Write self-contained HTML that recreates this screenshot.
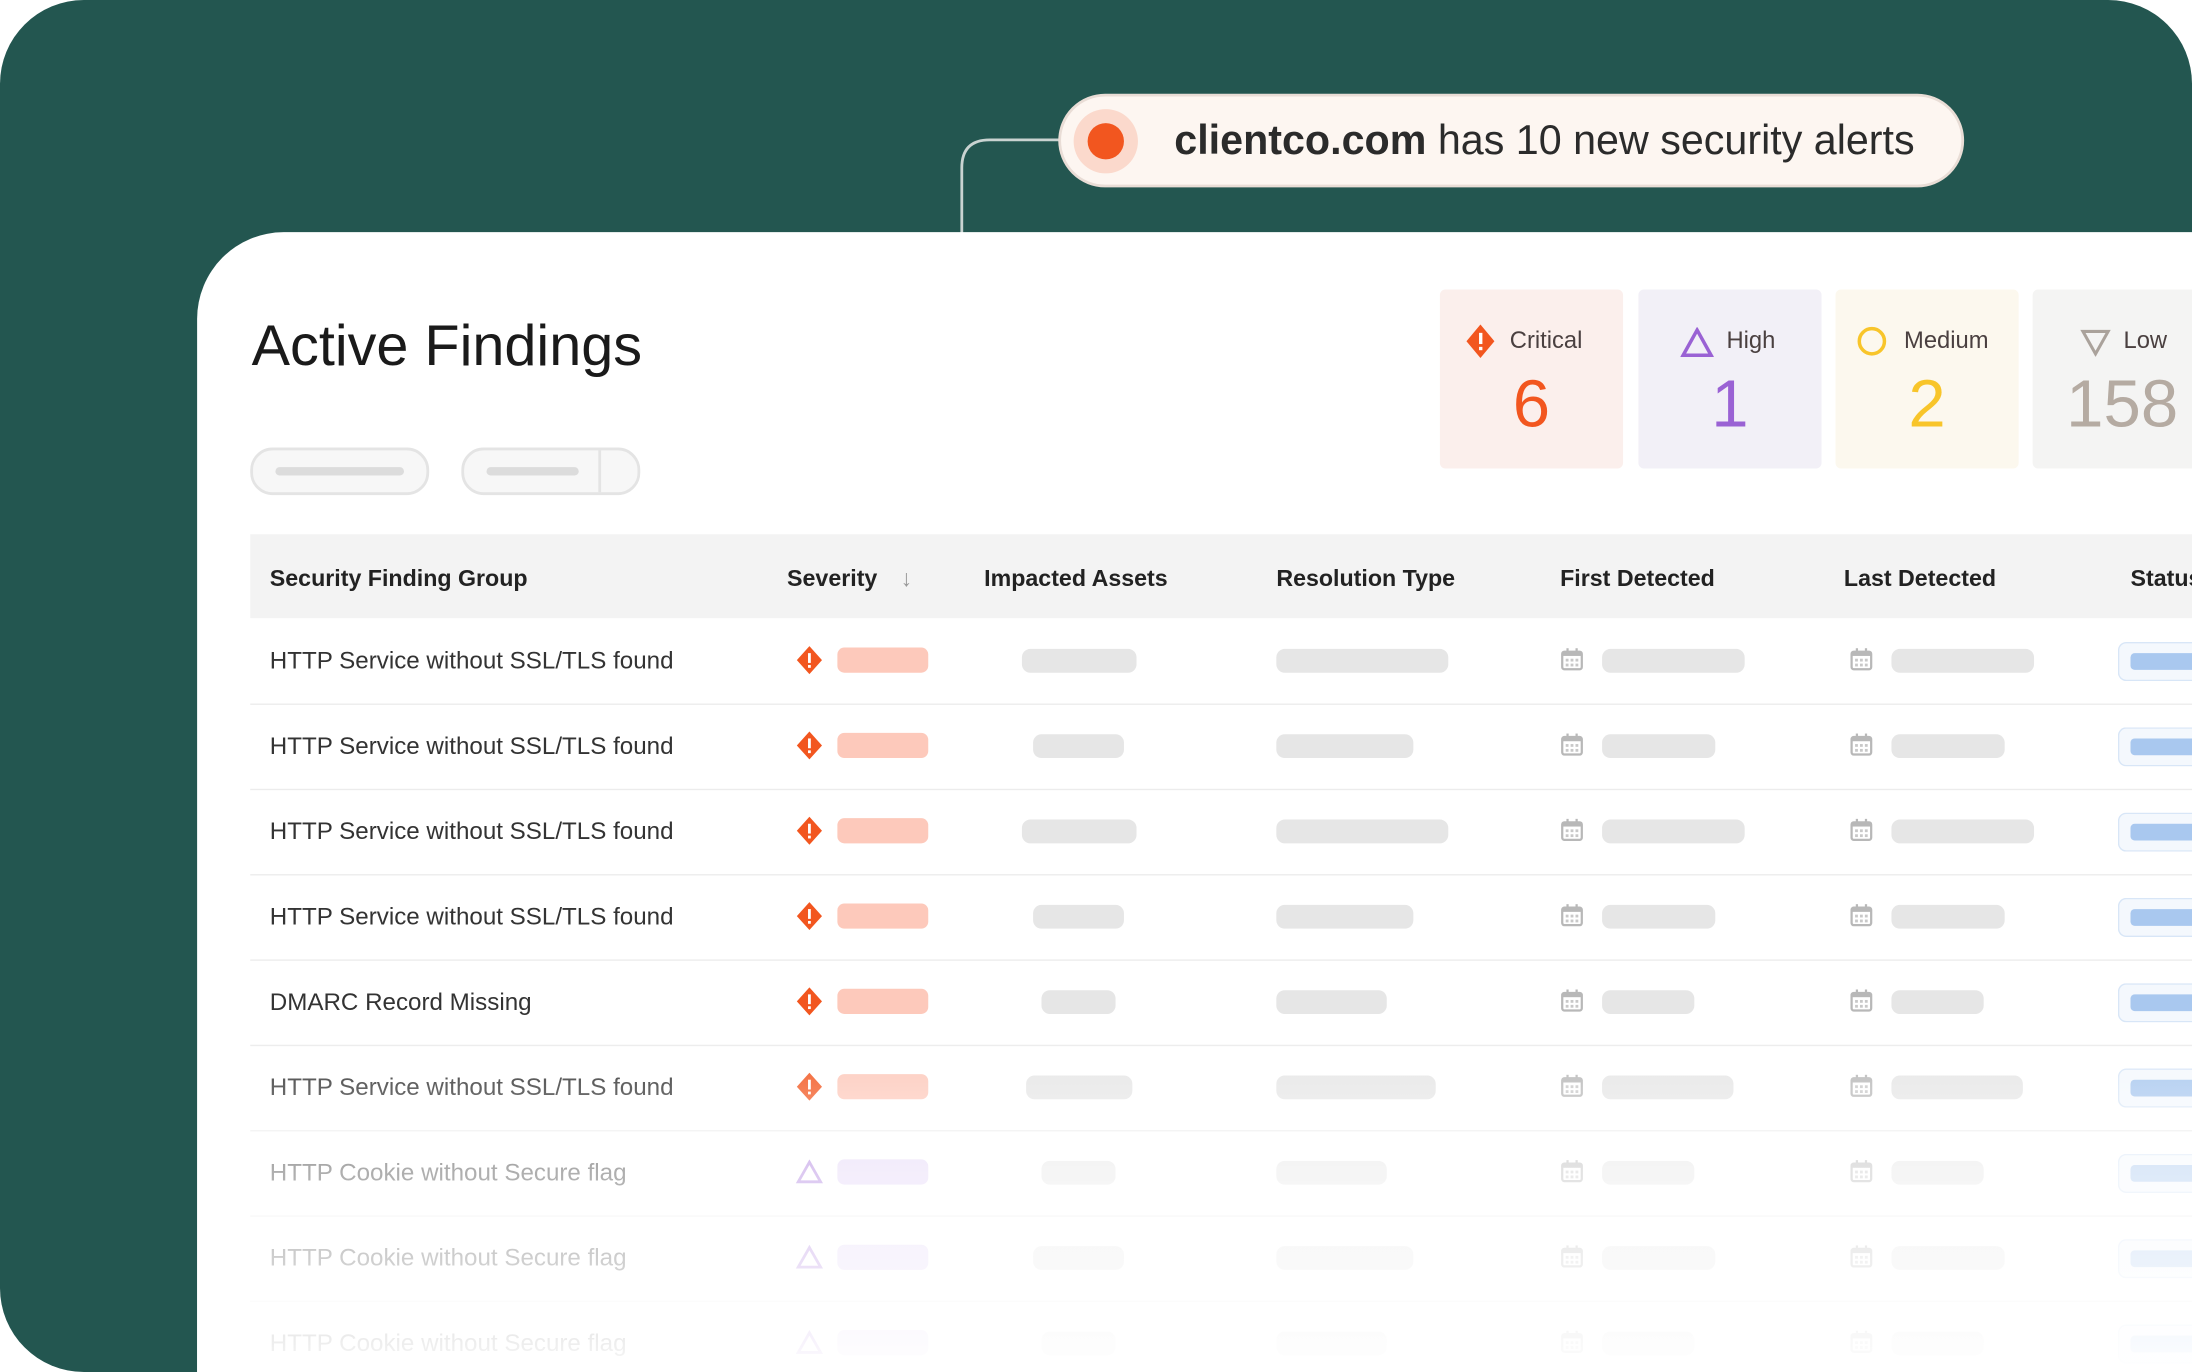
<!DOCTYPE html>
<html style="overflow:hidden;width:2192px;height:1372px"><head><meta charset="utf-8"><style>
html,body{margin:0;padding:0;background:#fff;width:2192px;height:1372px;overflow:hidden}
body{position:relative}
#s{position:absolute;left:0;top:0;width:1568px;height:981px;transform:scale(1.39796,1.39857);transform-origin:0 0;font-family:"Liberation Sans",sans-serif;overflow:hidden}
.bg{position:absolute;left:0;top:0;width:1568px;height:981px;background:#235650;border-radius:60px}
.card{position:absolute;left:141px;top:166px;width:1427px;height:815px;background:#fff;border-radius:62px 0 0 0}
.a{position:absolute}
.bar{position:absolute;height:17px;border-radius:6px;background:#e6e6e6}
.sb{position:absolute;left:599px;width:65px;height:18px;border-radius:5px}
.t{position:absolute;left:193px;font-size:17.3px;color:#333;line-height:20px;white-space:nowrap}
.h{position:absolute;top:404px;font-size:16.6px;font-weight:bold;color:#222;white-space:nowrap}
.sep{position:absolute;left:179px;width:1389px;height:1px;background:#ececec}
.stat{position:absolute;top:207px;width:131px;height:128px;border-radius:4px}
.stat .l{position:absolute;top:27px;font-size:17px;color:#4a4040}
.stat .n{position:absolute;top:55px;width:100%;text-align:center;font-size:48px}
.pill{position:absolute;left:1515px;width:52px;height:26px;border:1px solid #d8e6f7;border-right:0;border-radius:6px 0 0 6px;background:#f4f8fd}
.pill i{position:absolute;left:8px;top:7px;width:44px;height:12px;border-radius:3px 0 0 3px;background:#a9c8ef}
</style></head><body><div id="s">
<div class="bg"></div>
<svg class="a" style="left:0;top:0" width="1568" height="981"><path d="M760 100 H708 Q688 100 688 120 V168" fill="none" stroke="#c9d3d1" stroke-width="2"/></svg>
<div class="a" style="left:757px;top:67px;width:648px;height:67px;border-radius:34px;background:#fdf6f1;border:2px solid #e9ddd6;box-sizing:border-box"></div>
<div class="a" style="left:768px;top:78px;width:46px;height:46px;border-radius:50%;background:#fbd9cc"></div>
<div class="a" style="left:778px;top:88px;width:26px;height:26px;border-radius:50%;background:#f2561f"></div>
<div class="a" style="left:840px;top:84px;font-size:29.5px;color:#2b2b2b;white-space:nowrap"><b>clientco.com</b> has 10 new security alerts</div>
<div class="card"></div>
<div class="a" style="left:180px;top:224px;font-size:41.2px;color:#1a1a1a">Active Findings</div>
<div class="a" style="left:179px;top:320px;width:124px;height:30px;border:2px solid #e4e4e4;border-radius:16px;background:#f7f7f7"><div class="a" style="left:16px;top:12px;width:92px;height:6px;background:#dcdcdc;border-radius:3px"></div></div>
<div class="a" style="left:330px;top:320px;width:124px;height:30px;border:2px solid #e4e4e4;border-radius:16px;background:#f7f7f7"><div class="a" style="left:16px;top:12px;width:66px;height:6px;background:#dcdcdc;border-radius:3px"></div><div class="a" style="left:96px;top:0;width:2px;height:30px;background:#e4e4e4"></div></div>
<div class="stat" style="left:1030px;background:#fbefec"><svg class="a" style="left:18px;top:24px" width="22" height="26"><path d="M11 1 L21 13 L11 25 L1 13Z" fill="#f2561f"/><rect x="10" y="7" width="2.4" height="8" fill="#fff"/><rect x="10" y="17" width="2.4" height="2.4" fill="#fff"/></svg><div class="l" style="left:50px">Critical</div><div class="n" style="color:#f2561f">6</div></div>
<div class="stat" style="left:1172px;background:#f2f0f7"><svg class="a" style="left:30px;top:27px" width="24" height="22"><path d="M12 2 L22 20 H2Z" fill="none" stroke="#9a62d4" stroke-width="2.5"/></svg><div class="l" style="left:63px">High</div><div class="n" style="color:#9a62d4">1</div></div>
<div class="stat" style="left:1313px;background:#fcf8ee"><svg class="a" style="left:14px;top:25px" width="24" height="24"><circle cx="12" cy="12" r="9" fill="none" stroke="#f8c52a" stroke-width="2.5"/></svg><div class="l" style="left:49px">Medium</div><div class="n" style="color:#f8c52a">2</div></div>
<div class="stat" style="left:1454px;width:114px;border-radius:4px 0 0 4px;background:#f4f4f3;overflow:hidden"><svg class="a" style="left:34px;top:28px" width="22" height="20"><path d="M2 2 H20 L11 18Z" fill="none" stroke="#aaa29b" stroke-width="2.2"/></svg><div class="l" style="left:65px">Low</div><div class="n" style="color:#b5aba2;text-align:left;left:24px;white-space:nowrap">158</div></div>
<div class="a" style="left:179px;top:382px;width:1389px;height:60px;background:#f3f3f3"></div>
<div class="h" style="left:193px">Security Finding Group</div>
<div class="h" style="left:563px">Severity <span style="color:#999;font-weight:normal;margin-left:12px">↓</span></div>
<div class="h" style="left:704px">Impacted Assets</div>
<div class="h" style="left:913px">Resolution Type</div>
<div class="h" style="left:1116px">First Detected</div>
<div class="h" style="left:1319px">Last Detected</div>
<div class="h" style="left:1524px;width:44px;overflow:hidden">Status</div>
<div id="rows"></div>
<div class="a" style="left:141px;top:740px;width:1427px;height:241px;background:linear-gradient(rgba(255,255,255,0),rgba(255,255,255,.6) 40%,rgba(255,255,255,.97))"></div>
</div>
<script>
var R=[[1,'HTTP Service without SSL/TLS found',731,82,123,102],[1,'HTTP Service without SSL/TLS found',739,65,98,81],[1,'HTTP Service without SSL/TLS found',731,82,123,102],[1,'HTTP Service without SSL/TLS found',739,65,98,81],[1,'DMARC Record Missing',745,53,79,66],[1,'HTTP Service without SSL/TLS found',734,76,114,94],[0,'HTTP Cookie without Secure flag',745,53,79,66],[0,'HTTP Cookie without Secure flag',739,65,98,81],[0,'HTTP Cookie without Secure flag',745,53,79,66]];
var h='';
R.forEach(function(r,i){var c=472+61*i,y=c-9;
h+='<div class="t" style="top:'+(c-10)+'px">'+r[1]+'</div>';
h+=r[0]?'<svg class="a" style="left:569px;top:'+(c-11)+'px" width="20" height="22"><path d="M10 1L19 11L10 21L1 11Z" fill="#f2561f"/><rect x="9" y="6" width="2" height="7" fill="#fff"/><rect x="9" y="14.5" width="2" height="2" fill="#fff"/></svg><div class="sb" style="top:'+y+'px;background:#fdc9bb"></div>'
:'<svg class="a" style="left:569px;top:'+(c-9)+'px" width="20" height="18"><path d="M10 2L18 16H2Z" fill="none" stroke="#a877dc" stroke-width="2"/></svg><div class="sb" style="top:'+y+'px;background:#e2d3f6"></div>';
h+='<div class="bar" style="left:'+r[2]+'px;width:'+r[3]+'px;top:'+(c-8)+'px"></div><div class="bar" style="left:913px;width:'+r[4]+'px;top:'+(c-8)+'px"></div>';
[1116,1323].forEach(function(x,k){h+='<svg class="a" style="left:'+x+'px;top:'+(c-9)+'px" width="17" height="17"><rect x="1.5" y="3" width="14" height="12.5" rx="1.5" fill="none" stroke="#b8b8b8" stroke-width="1.6"/><rect x="1.5" y="3" width="14" height="3" fill="#b8b8b8"/><rect x="4.5" y="0.5" width="1.6" height="4" fill="#b8b8b8"/><rect x="11" y="0.5" width="1.6" height="4" fill="#b8b8b8"/><g fill="#c8c8c8"><rect x="4" y="8" width="2" height="2"/><rect x="7.5" y="8" width="2" height="2"/><rect x="11" y="8" width="2" height="2"/><rect x="4" y="11.5" width="2" height="2"/><rect x="7.5" y="11.5" width="2" height="2"/><rect x="11" y="11.5" width="2" height="2"/></g></svg><div class="bar" style="left:'+(x+30)+'px;width:'+r[5]+'px;top:'+(c-8)+'px"></div>';});
if(c+13<981)h+='<div class="pill" style="top:'+(c-13)+'px"><i></i></div>';
if(i<8)h+='<div class="sep" style="top:'+(c+31)+'px"></div>';});
document.getElementById('rows').outerHTML=h;
</script>
</body></html>
